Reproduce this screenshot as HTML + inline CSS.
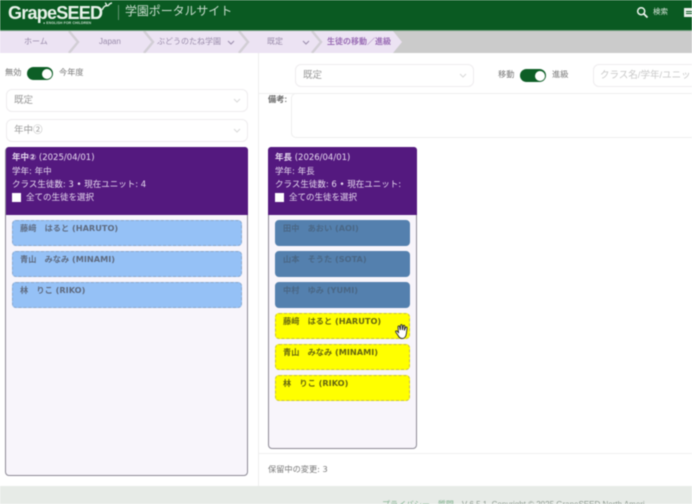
<!DOCTYPE html>
<html lang="ja"><head><meta charset="utf-8"><title>学園ポータルサイト</title>
<style>
*{box-sizing:border-box}
html,body{margin:0;padding:0;background:#fff}
#p{position:relative;width:692px;height:504px;overflow:hidden;background:#fff;font-family:"Liberation Sans","Noto Sans CJK JP",sans-serif;filter:blur(.6px);color:#555}
#p div,#p span.a{position:absolute;white-space:nowrap}
.sel{background:#fff;border:1px solid #eeecee;border-radius:6px;color:#999;font-size:9.5px;line-height:22px;padding-left:7px}
.sel svg{position:absolute;right:6px;top:8px}
.bc{font-size:8px;color:#9a8cab;top:31px;line-height:22px}
.tg{width:26px;height:13px;border-radius:7px;background:#0d5e26}
.tg i{position:absolute;right:1.5px;top:1.5px;width:10px;height:10px;border-radius:50%;background:#fff}
.lb{font-size:8.2px;color:#777;line-height:12px}
.card{background:#f8f5fb;border:1px solid #8d8a96;border-radius:4px}
.hd{background:#54197f;border-radius:3px 3px 0 0;color:#e6d9ef;font-size:8.5px;font-family:"DejaVu Sans","Noto Sans CJK JP",sans-serif}
.hd div{line-height:11px;left:6px}
.cb{width:9px;height:9px;background:#fff;left:6px}
.st{height:26px;border-radius:4px;font-size:8.2px;line-height:14px;padding:0 0 0 7px;font-weight:700;font-family:"DejaVu Sans","Noto Sans CJK JP",sans-serif}
.b{background:#95c1f6;border:1px dashed #8aa6ca;color:#5f6b80}
.d{background:#5480ae;border:1px solid #5480ae;color:#4a6786}
.y{background:#ffff00;border:1px dashed #c9bf3c;color:#67670f}
</style></head><body><div id="p">

<div style="left:0;top:0;width:692px;height:30px;background:#0a5a22"></div>
<div style="left:0;top:30px;width:692px;height:1px;background:#6f9c7b"></div>
<div style="left:8px;top:1px;font-size:18px;font-weight:700;color:#e8f2ea;letter-spacing:-.75px;line-height:24px">GrapeSEED</div>
<svg style="position:absolute;left:101px;top:2px" width="12" height="9" viewBox="0 0 12 9"><path d="M1 8C3 4 5 3 7 4M7 4C8 2 10 1 11 1M6 4C5 2 5 1 4 1" stroke="#dfeee2" stroke-width="1.4" fill="none"/></svg>
<div style="left:43px;top:20px;font-size:3.5px;color:#c8dccd;line-height:6px;font-weight:700;letter-spacing:.1px">● ENGLISH FOR CHILDREN</div>
<div style="left:118px;top:5px;width:1px;height:15px;background:#5f9270"></div>
<div style="left:125px;top:3px;font-size:12px;color:#c8dccd;line-height:16px;letter-spacing:-.1px">学園ポータルサイト</div>
<svg style="position:absolute;left:636px;top:6px" width="13" height="13" viewBox="0 0 13 13"><circle cx="5.2" cy="5.2" r="3.5" stroke="#eef5ef" stroke-width="1.5" fill="none"/><path d="M8 8l3.5 3.5" stroke="#eef5ef" stroke-width="1.8"/></svg>
<div style="left:653px;top:6px;font-size:7.5px;color:#d8e6da;line-height:12px">検索</div>
<div style="left:684px;top:8px;width:10px;height:9px;background:#e8efe9"></div>
<div style="left:686px;top:10.5px;width:6px;height:1px;background:#0a5a22"></div>
<div style="left:686px;top:13px;width:6px;height:1px;background:#0a5a22"></div>

<div style="left:0;top:31px;width:692px;height:22px;background:#cbcbcb"></div>
<svg style="position:absolute;left:0;top:31px" width="405" height="22" viewBox="0 0 405 22">
<path d="M0 0H393L402 11 393 22H0Z" fill="#ece3f3"/>
<g fill="none" stroke="#d2ced5" stroke-width="2.4"><path d="M69 0l9 11-9 11"/><path d="M144 0l9 11-9 11"/><path d="M239 0l9 11-9 11"/><path d="M312 0l9 11-9 11"/></g>
</svg>
<div class="bc" style="left:24px;">ホーム</div>
<div class="bc" style="left:99px;">Japan</div>
<div class="bc" style="left:157px;">ぶどうのたね学園</div>
<svg style="position:absolute;left:227px;top:40px" width="8" height="5"><path d="M1 1l3 3 3-3" stroke="#9a8cab" fill="none"/></svg>
<div class="bc" style="left:267px;">既定</div>
<svg style="position:absolute;left:302px;top:40px" width="8" height="5"><path d="M1 1l3 3 3-3" stroke="#9a8cab" fill="none"/></svg>
<div class="bc" style="left:327px;color:#9a6db5;font-weight:700;font-size:8px">生徒の移動／進級</div>

<div style="left:258px;top:53px;width:1px;height:433px;background:#eeeeee"></div>

<div class="lb" style="left:5px;top:67px">無効</div>
<div class="tg" style="left:27px;top:67px"><i></i></div>
<div class="lb" style="left:59px;top:67px">今年度</div>
<div class="sel" style="left:6px;top:89px;width:242px;height:23px">既定<svg width="8" height="5"><path d="M1 1l3 3 3-3" stroke="#d8d8d8" fill="none"/></svg></div>
<div class="sel" style="left:6px;top:119px;width:242px;height:23px">年中②<svg width="8" height="5"><path d="M1 1l3 3 3-3" stroke="#d8d8d8" fill="none"/></svg></div>

<div class="card" style="left:5px;top:147px;width:243px;height:329px"></div>
<div class="hd" style="left:6px;top:147px;width:242px;height:68px">
<div style="top:6px"><b>年中②</b> (2025/04/01)</div>
<div style="top:20px">学年: 年中</div>
<div style="top:33px">クラス生徒数: 3 • 現在ユニット: 4</div>
<div class="cb" style="top:46px"></div>
<div style="left:20px;top:46px">全ての生徒を選択</div>
</div>
<div class="st b" style="left:12px;top:220px;width:230px">藤﨑　はると (HARUTO)</div>
<div class="st b" style="left:12px;top:251px;width:230px">青山　みなみ (MINAMI)</div>
<div class="st b" style="left:12px;top:282px;width:230px">林　りこ (RIKO)</div>

<div class="sel" style="left:295px;top:64px;width:179px;height:23px">既定<svg width="8" height="5"><path d="M1 1l3 3 3-3" stroke="#d8d8d8" fill="none"/></svg></div>
<div class="lb" style="left:498px;top:69px">移動</div>
<div class="tg" style="left:520px;top:69px"><i></i></div>
<div class="lb" style="left:552px;top:69px">進級</div>
<div class="sel" style="left:593px;top:64px;width:110px;height:23px;color:#c8c8c8;padding-left:6px">クラス名/学年/ユニット</div>
<div style="left:259px;top:93px;width:433px;height:1px;background:#f0f0f0"></div>
<div class="lb" style="left:268px;top:94px;font-weight:700;color:#6a6a6a">備考:</div>
<div style="left:291px;top:93px;width:420px;height:45px;background:#fff;border:1px solid #eeeeee;border-radius:5px"></div>

<div class="card" style="left:268px;top:147px;width:149px;height:302px"></div>
<div class="hd" style="left:268px;top:147px;width:149px;height:68px;overflow:hidden">
<div style="top:6px;left:7px"><b>年長</b> (2026/04/01)</div>
<div style="top:20px;left:7px">学年: 年長</div>
<div style="top:33px;left:7px">クラス生徒数: 6 • 現在ユニット:</div>
<div class="cb" style="top:46px;left:7px"></div>
<div style="left:21px;top:46px">全ての生徒を選択</div>
</div>
<div class="st d" style="left:275px;top:220px;width:135px">田中　あおい (AOI)</div>
<div class="st d" style="left:275px;top:251px;width:135px">山本　そうた (SOTA)</div>
<div class="st d" style="left:275px;top:282px;width:135px">中村　ゆみ (YUMI)</div>
<div class="st y" style="left:275px;top:313px;width:135px">藤﨑　はると (HARUTO)</div>
<div class="st y" style="left:275px;top:344px;width:135px">青山　みなみ (MINAMI)</div>
<div class="st y" style="left:275px;top:375px;width:135px">林　りこ (RIKO)</div>
<svg style="position:absolute;left:394px;top:323px" width="16" height="17" viewBox="0 0 16 17"><path d="M2 9.5C1 8.5 1.8 7.5 3 8L4.5 9.5 4 3.8C4 2.8 5.4 2.6 5.6 3.6L6.3 7 6.6 2.4C6.7 1.3 8.1 1.3 8.2 2.4L8.4 7 9.3 2.9C9.5 1.9 10.9 2.1 10.8 3.2L10.3 7.5 11.6 4.5C12 3.6 13.3 4 13.1 5L12.4 10.5C12.1 13 11 15.5 8 15.5 5.5 15.5 4.5 13.5 3.8 12Z" fill="#fff" stroke="#222" stroke-width=".9"/></svg>

<div style="left:259px;top:453px;width:433px;height:1px;background:#efefef"></div>
<div class="lb" style="left:268px;top:463px;color:#777;font-family:'DejaVu Sans','Noto Sans CJK JP',sans-serif">保留中の変更: 3</div>

<div style="left:0;top:486px;width:692px;height:18px;background:#e7ebe7"></div>
<div style="left:382px;top:500px;font-size:8px;color:#8d9a90;line-height:10px;"><span style="color:#7fb08d">プライバシー</span>　<span style="color:#7fb08d">質問</span>　V 6.5.1. Copyright © 2025 GrapeSEED North Ameri</div>
</div></body></html>
